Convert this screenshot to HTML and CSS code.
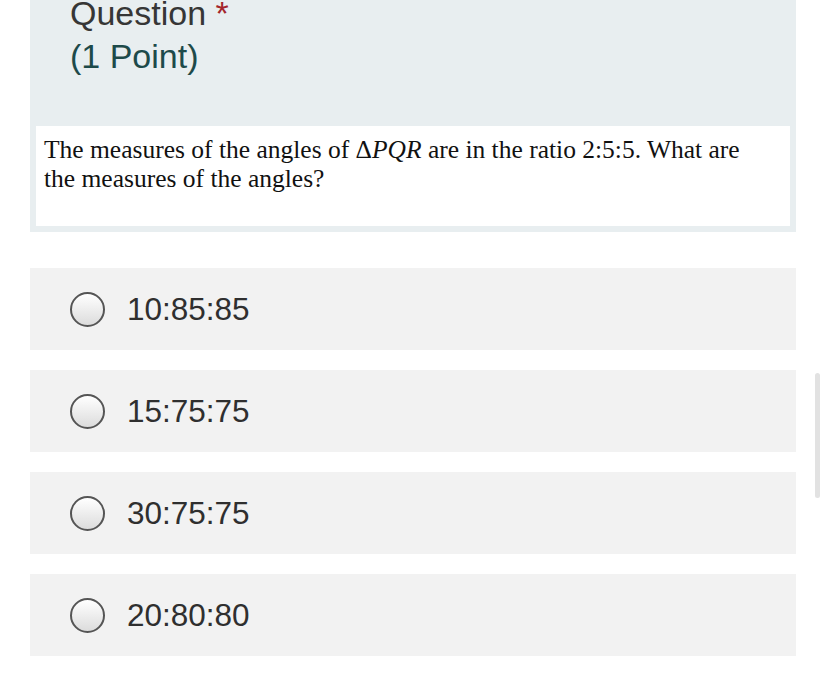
FILE: index.html
```html
<!DOCTYPE html>
<html>
<head>
<meta charset="utf-8">
<link rel="stylesheet" href="styles.css">
</head>
<body>
<div class="page">
  <div class="question-panel">
    <div class="title">
      <div class="title-line">Question <span class="req">*</span></div>
      <div class="points">(1 Point)</div>
    </div>
    <div class="prompt">The measures of the angles of &Delta;<i>PQR</i> are in the ratio 2:5:5. What are the measures of the angles?</div>
  </div>
  <div class="options">
    <label class="option"><span class="radio"></span><span class="opt-text">10:85:85</span></label>
    <label class="option"><span class="radio"></span><span class="opt-text">15:75:75</span></label>
    <label class="option"><span class="radio"></span><span class="opt-text">30:75:75</span></label>
    <label class="option"><span class="radio"></span><span class="opt-text">20:80:80</span></label>
  </div>
</div>
<div class="scrollbar"></div>
</body>
</html>
```
FILE: styles.css
```css
html, body {
  margin: 0;
  padding: 0;
  background: #ffffff;
  overflow: hidden;
}
.page {
  width: 766px;
  margin-left: 30px;
  font-family: "Liberation Sans", Arial, sans-serif;
}
.question-panel {
  background: #e8eef0;
  padding: 0 6px 6px;
}
.title {
  margin-top: -8px;
  padding-left: 34px;
  font-size: 34px;
  line-height: 43px;
  height: 86px;
  margin-bottom: 48px;
}
.title-line {
  color: #363636;
}
.req {
  color: #a4262c;
}
.points {
  color: #1d4a4a;
}
.prompt {
  background: #ffffff;
  height: 100px;
  box-sizing: border-box;
  padding: 9px 30px 0 8px;
  font-family: "Liberation Serif", "Times New Roman", serif;
  font-size: 25.5px;
  line-height: 29px;
  color: #111111;
}
.options {
  margin-top: 36px;
  display: flex;
  flex-direction: column;
  gap: 20px;
}
.option {
  background: #f2f2f2;
  height: 82px;
  display: flex;
  align-items: center;
  padding-left: 40px;
}
.radio {
  width: 35px;
  height: 35px;
  box-sizing: border-box;
  border: 2px solid #555555;
  border-radius: 50%;
  background: linear-gradient(#ffffff, #dcdcdc);
  flex: none;
}
.opt-text {
  margin-left: 22px;
  font-size: 31.5px;
  color: #2f2f2f;
}
.scrollbar {
  position: absolute;
  left: 815px;
  top: 373px;
  width: 5px;
  height: 125px;
  border-radius: 3px;
  background: #e2e2e2;
}
```
